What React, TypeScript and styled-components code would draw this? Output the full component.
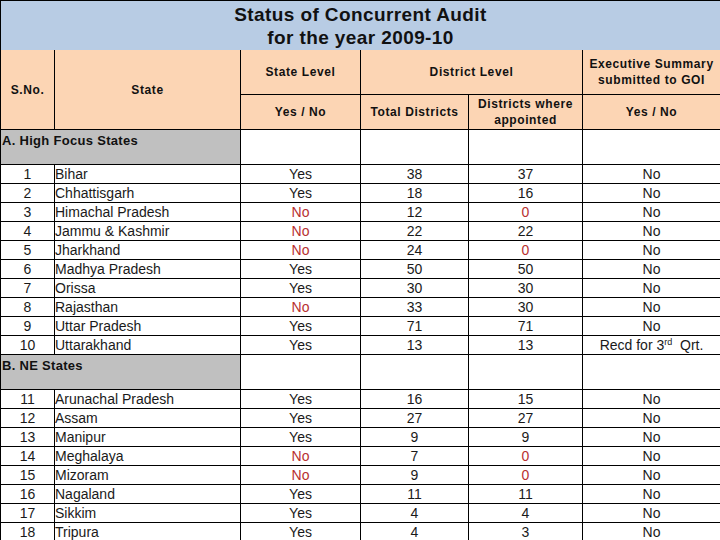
import React from "react";
import styled, { createGlobalStyle } from "styled-components";

const GlobalStyle = createGlobalStyle`
  body {
    margin: 0;
    background: #ffffff;
    font-family: "Liberation Sans", Arial, sans-serif;
  }
`;

const Sheet = styled.table`
  width: 720px;
  border-collapse: collapse;
  table-layout: fixed;
  color: #111;
`;

const TitleCell = styled.th`
  height: 49px;
  background: #b8cce4;
  border: 1px solid #000;
  border-bottom: hidden;
  font-size: 19px;
  line-height: 23px;
  font-weight: bold;
  text-align: center;
  vertical-align: middle;
  letter-spacing: 0.4px;
  padding: 0;
`;

const HeadCell = styled.th<{ $h?: number }>`
  height: ${(p) => p.$h ?? 34}px;
  background: #fcd5b4;
  border: 1px solid #000;
  font-size: 12px;
  line-height: 16px;
  font-weight: bold;
  letter-spacing: 0.6px;
  text-align: center;
  vertical-align: middle;
  padding: 0 1px;
`;

const SectionCell = styled.td`
  height: 31px;
  background: #c0c0c0;
  border: 1px solid #000;
  font-size: 13px;
  line-height: 16px;
  font-weight: bold;
  letter-spacing: 0.3px;
  vertical-align: top;
  padding: 3px 0 0 1px;
`;

const BlankCell = styled.td`
  border: 1px solid #000;
  background: #fff;
`;

const Cell = styled.td<{ $left?: boolean; $red?: boolean }>`
  height: 18px;
  border: 1px solid #000;
  font-size: 14px;
  line-height: 18px;
  padding: 0;
  white-space: nowrap;
  overflow: hidden;
  text-align: ${(p) => (p.$left ? "left" : "center")};
  color: ${(p) => (p.$red ? "#b83030" : "#1a1a1a")};
`;

const Sup = styled.sup`
  font-size: 9px;
  vertical-align: 5px;
  line-height: 0;
`;

type Row = [number, string, string, number, number, React.ReactNode];

const highFocus: Row[] = [
  [1, "Bihar", "Yes", 38, 37, "No"],
  [2, "Chhattisgarh", "Yes", 18, 16, "No"],
  [3, "Himachal Pradesh", "No", 12, 0, "No"],
  [4, "Jammu & Kashmir", "No", 22, 22, "No"],
  [5, "Jharkhand", "No", 24, 0, "No"],
  [6, "Madhya Pradesh", "Yes", 50, 50, "No"],
  [7, "Orissa", "Yes", 30, 30, "No"],
  [8, "Rajasthan", "No", 33, 30, "No"],
  [9, "Uttar Pradesh", "Yes", 71, 71, "No"],
  [
    10,
    "Uttarakhand",
    "Yes",
    13,
    13,
    <>
      Recd for 3<Sup>rd</Sup>&nbsp; Qrt.
    </>,
  ],
];

const neStates: Row[] = [
  [11, "Arunachal Pradesh", "Yes", 16, 15, "No"],
  [12, "Assam", "Yes", 27, 27, "No"],
  [13, "Manipur", "Yes", 9, 9, "No"],
  [14, "Meghalaya", "No", 7, 0, "No"],
  [15, "Mizoram", "No", 9, 0, "No"],
  [16, "Nagaland", "Yes", 11, 11, "No"],
  [17, "Sikkim", "Yes", 4, 4, "No"],
  [18, "Tripura", "Yes", 4, 3, "No"],
];

const DataRow = ({ row }: { row: Row }) => {
  const [no, state, level, total, appointed, summary] = row;
  return (
    <tr>
      <Cell>{no}</Cell>
      <Cell $left>{state}</Cell>
      <Cell $red={level === "No"}>{level}</Cell>
      <Cell>{total}</Cell>
      <Cell $red={appointed === 0}>{appointed}</Cell>
      <Cell>{summary}</Cell>
    </tr>
  );
};

const SectionRow = ({ label }: { label: string }) => (
  <tr>
    <SectionCell colSpan={2}>{label}</SectionCell>
    <BlankCell />
    <BlankCell />
    <BlankCell />
    <BlankCell />
  </tr>
);

export default function App() {
  return (
    <>
      <GlobalStyle />
      <Sheet>
        <colgroup>
          <col style={{ width: 54 }} />
          <col style={{ width: 186 }} />
          <col style={{ width: 120 }} />
          <col style={{ width: 108 }} />
          <col style={{ width: 114 }} />
          <col style={{ width: 138 }} />
        </colgroup>
        <thead>
          <tr>
            <TitleCell colSpan={6}>
              Status of Concurrent Audit
              <br />
              for the year 2009-10
            </TitleCell>
          </tr>
          <tr>
            <HeadCell rowSpan={2}>S.No.</HeadCell>
            <HeadCell rowSpan={2}>State</HeadCell>
            <HeadCell $h={44}>State Level</HeadCell>
            <HeadCell $h={44} colSpan={2}>
              District Level
            </HeadCell>
            <HeadCell $h={44}>
              Executive Summary
              <br />
              submitted to GOI
            </HeadCell>
          </tr>
          <tr>
            <HeadCell $h={34}>Yes / No</HeadCell>
            <HeadCell $h={34}>Total Districts</HeadCell>
            <HeadCell $h={34}>
              Districts where
              <br />
              appointed
            </HeadCell>
            <HeadCell $h={34}>Yes / No</HeadCell>
          </tr>
        </thead>
        <tbody>
          <SectionRow label="A. High Focus States" />
          {highFocus.map((r) => (
            <DataRow key={r[0]} row={r} />
          ))}
          <SectionRow label="B. NE States" />
          {neStates.map((r) => (
            <DataRow key={r[0]} row={r} />
          ))}
        </tbody>
      </Sheet>
    </>
  );
}
